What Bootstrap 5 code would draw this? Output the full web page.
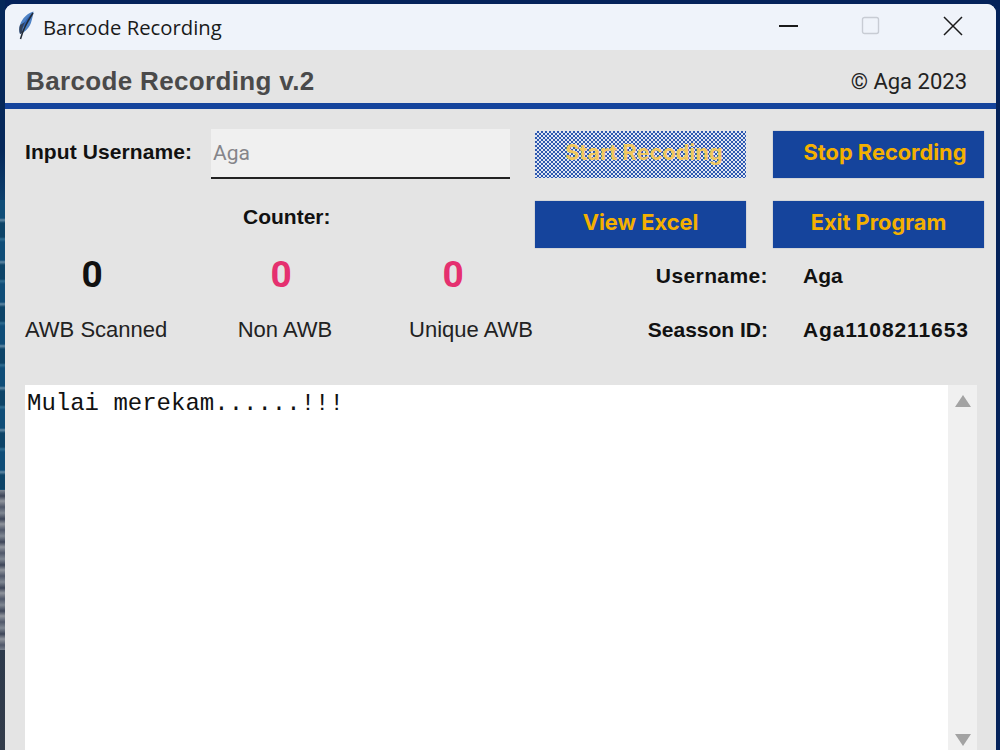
<!DOCTYPE html>
<html lang="en">
<head>
<meta charset="utf-8">
<title>Barcode Recording</title>
<link rel="stylesheet" href="https://cdn.jsdelivr.net/npm/bootstrap@5.3.0/dist/css/bootstrap.min.css">
<style>
html,body{height:750px;overflow:hidden}
body{padding:4px 4px 0 5px;background:
  repeating-linear-gradient(180deg,#7f8792 0,#3d4558 6px,#8f949c 11px,#50586a 17px,#7f8792 23px) 0 490px/5px 160px no-repeat,
  repeating-linear-gradient(180deg,#0f4d78 0,#0f4d78 18px,#5f88a4 20px,#0d4468 23px,#0d4468 37px,#2f6c90 39px,#0f4d78 42px) 0 200px/5px 290px no-repeat,
  linear-gradient(180deg,#05285a 0,#05285a 150px,#0c3f6c 200px,#0c3f6c 490px,#2d3a4c 650px,#333c4a 750px) 0 0/5px 750px no-repeat,
  #04225a}
.app-window{height:746px;background:#e4e4e4;border-radius:9px 9px 0 0;overflow:hidden;font-family:"Liberation Sans",Arial,sans-serif;color:#111}
.title-strip{height:46px;background:#eff3fa;padding:0 2px 2px 12px}
.title-text{font-family:"Open Sans",sans-serif;font-size:20.300px;margin-left:8px;color:#1a1a1a;margin-top:2px}
.feather{width:18px;height:30px;margin-top:0}
.win-btn{width:82px;height:44px}
.app-head{height:53px;padding:10px 29px 0 21px}
.app-name{font-size:26px;font-weight:700;color:#4a4a4a;letter-spacing:.35px;margin:0}
.app-copy{font-family:Roboto,sans-serif;font-size:22px;color:#222}
.rule-blue{height:6px;background:#15449c}
.main-area{padding:20px 0 0 20px}
.left-pane{width:510px}
.field-label{font-size:21px;font-weight:700;width:186px;letter-spacing:.1px;margin-top:-4px}
.name-input.form-control{width:299px;height:50px;border:0;border-bottom:2px solid #222;border-radius:0;background:#f0f0f0;padding:0 2px;font-family:Roboto,sans-serif;font-size:21px;color:#85858a;box-shadow:none}
.counter-title{font-size:21px;font-weight:700;height:30px;line-height:30px;margin:23px 0 0 0;padding-left:218px}
.zero-grid{display:grid;grid-template-columns:134px 244px 100px;height:40px;margin-top:23px;text-align:center;font-family:Roboto,sans-serif;font-weight:700;font-size:37px;line-height:40px}
.pink-num{color:#e5306f}
.label-grid{display:grid;grid-template-columns:140px 240px 132px;height:30px;line-height:30px;margin-top:20px;text-align:center;font-size:22px;color:#222;white-space:nowrap}
.right-pane{width:449px;padding-top:2px}
.btn-pair{display:flex;gap:27px}
.btn-pair+.btn-pair{margin-top:23px}
.app-btn.btn{width:211px;height:47px;padding:0 0 5px;border:0;border-radius:0;background:#15449c;color:#f4b000;font-family:Inter,sans-serif;font-weight:700;font-size:21.800px;opacity:1;box-shadow:0 0 1px #8a93a8}
.app-btn.dither-btn{padding-left:7px;background:repeating-conic-gradient(#2c57ae 0 25%,#dfe5f3 0 50%) 0 0/4px 4px;color:#f2c75c;box-shadow:none}
.app-btn.stop-btn{padding-left:13px}
.info-row{display:flex;height:30px;line-height:30px;font-size:21px;font-weight:700}
.info-row span:first-child{width:233px;text-align:right}
.info-row span:last-child{margin-left:35px}
.info-first span:first-child{letter-spacing:.4px}
.info-second span:last-child{letter-spacing:.9px}
.info-first{margin-top:13px}
.info-second{margin-top:24px}
.log-wrap{margin:40px 0 0 20px;width:952px;height:365px}
.log-box{flex:1;background:#fff;font-family:"Liberation Mono",monospace;font-size:24px;line-height:27px;padding:5px 2px;color:#111}
.scroll-rail{width:29px;background:#f0f0f0;padding:10px 6px 0}
</style>
</head>
<body>
<div class="app-window d-flex flex-column">
  <div class="title-strip d-flex align-items-center flex-shrink-0">
    <svg class="feather" viewBox="0 0 18 30" aria-hidden="true">
      <path d="M16.500 .5C11 2 5 7 3 14c-1 3-1 6 0 9l2-1c4-2 8-6 9.500-12C15.500 6 16.500 3 16.500 .5z" fill="#4f82c4"/>
      <path d="M15.500 2C11 6 7 10 5 17l6-5c2-3 3.500-6 4.500-10z" fill="#2d62b5"/>
      <path d="M3 14c-1 3-1 6 0 9l2-1c0-4 1-7 3-11z" fill="#33415a"/>
      <path d="M16 2C12 8 7 15 3.500 28" fill="none" stroke="#222a36" stroke-width="1.500"/>
    </svg>
    <div class="title-text">Barcode Recording</div>
    <div class="ms-auto d-flex">
      <div class="win-btn d-flex align-items-center justify-content-center">
        <svg width="20" height="20" viewBox="0 0 20 20" aria-hidden="true"><path d="M0 10H19" stroke="#1a1a1a" stroke-width="1.800"/></svg>
      </div>
      <div class="win-btn d-flex align-items-center justify-content-center">
        <svg width="20" height="20" viewBox="0 0 20 20" aria-hidden="true"><rect x="1.500" y="1.500" width="16" height="16" rx="2" fill="none" stroke="#c8ccd4" stroke-width="1.400"/></svg>
      </div>
      <div class="win-btn d-flex align-items-center justify-content-center">
        <svg width="20" height="20" viewBox="0 0 20 20" aria-hidden="true"><path d="M1 1L19 19M19 1L1 19" stroke="#1a1a1a" stroke-width="1.500"/></svg>
      </div>
    </div>
  </div>

  <div class="app-head d-flex align-items-center justify-content-between flex-shrink-0">
    <h1 class="app-name">Barcode Recording v.2</h1>
    <div class="app-copy">© Aga 2023</div>
  </div>
  <div class="rule-blue flex-shrink-0"></div>

  <div class="main-area d-flex flex-shrink-0">
    <div class="left-pane">
      <div class="d-flex align-items-center">
        <div class="field-label">Input Username:</div>
        <input class="form-control name-input" type="text" value="Aga">
      </div>
      <div class="counter-title">Counter:</div>
      <div class="zero-grid"><div>0</div><div class="pink-num">0</div><div class="pink-num">0</div></div>
      <div class="label-grid"><div>AWB Scanned</div><div>Non AWB</div><div>Unique AWB</div></div>
    </div>
    <div class="right-pane">
      <div class="btn-pair">
        <button class="btn app-btn dither-btn" type="button">Start Recoding</button>
        <button class="btn app-btn stop-btn" type="button">Stop Recording</button>
      </div>
      <div class="btn-pair">
        <button class="btn app-btn" type="button">View Excel</button>
        <button class="btn app-btn" type="button">Exit Program</button>
      </div>
      <div class="info-row info-first"><span>Username:</span><span>Aga</span></div>
      <div class="info-row info-second"><span>Seasson ID:</span><span>Aga1108211653</span></div>
    </div>
  </div>

  <div class="log-wrap d-flex">
    <div class="log-box">Mulai merekam......!!!</div>
    <div class="scroll-rail d-flex flex-column justify-content-between align-items-center">
      <svg width="16" height="12" viewBox="0 0 16 12" aria-hidden="true"><path d="M8 0L16 12H0z" fill="#a3a3a3"/></svg>
      <svg class="mb-1" width="16" height="12" viewBox="0 0 16 12" aria-hidden="true"><path d="M0 0H16L8 12z" fill="#a3a3a3"/></svg>
    </div>
  </div>
</div>
<script src="https://cdn.jsdelivr.net/npm/bootstrap@5.3.0/dist/js/bootstrap.bundle.min.js"></script>
</body>
</html>
